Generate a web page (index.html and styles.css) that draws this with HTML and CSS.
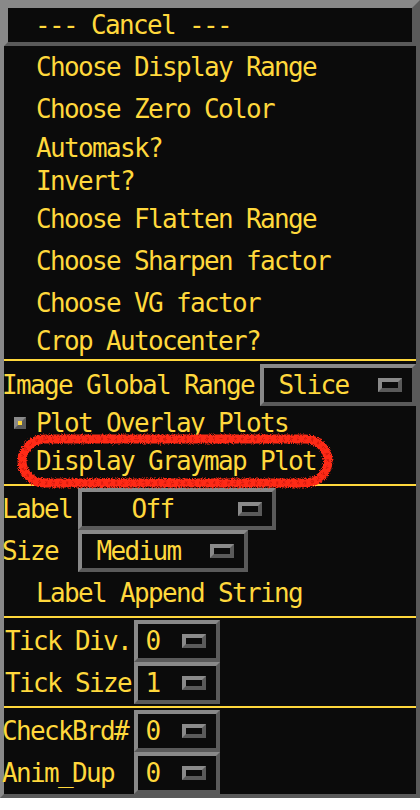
FILE: index.html
```html
<!DOCTYPE html>
<html>
<head>
<meta charset="utf-8">
<link rel="stylesheet" href="styles.css">
</head>
<body>
<div class="frame">
  <div class="cancel">--- Cancel ---</div>
  <div class="menu">
    <div class="item h42">Choose Display Range</div>
    <div class="item h42">Choose Zero Color</div>
    <div class="item h35">Automask?</div>
    <div class="item h32">Invert?</div>
    <div class="item h44">Choose Flatten Range</div>
    <div class="item h40">Choose Sharpen factor</div>
    <div class="item h44">Choose VG factor</div>
    <div class="item h31">Crop Autocenter?</div>
  </div>
  <div class="sep sep-first"></div>
  <div class="field first">
    <span class="flabel w-igr">Image Global Range</span>
    <div class="dropdown w156"><span class="dd-text">Slice</span><span class="ind"></span></div>
  </div>
  <div class="item check h33"><span class="cbox"></span>Plot Overlay Plots</div>
  <div class="item marked h45">Display Graymap Plot<svg class="scribble" viewBox="0 0 316 54" width="316" height="54">
      <defs>
        <filter id="rough" x="-5%" y="-25%" width="110%" height="150%">
          <feTurbulence type="fractalNoise" baseFrequency="1.1" numOctaves="2" seed="7" result="n"/>
          <feDisplacementMap in="SourceGraphic" in2="n" scale="5" xChannelSelector="R" yChannelSelector="G"/>
        </filter>
      </defs>
      <rect x="5" y="5" width="306" height="44" rx="23" ry="22" fill="none" stroke="#fe2a18" stroke-width="9" filter="url(#rough)"/>
      <rect x="5" y="5" width="306" height="44" rx="23" ry="22" fill="none" stroke="#d81a10" stroke-width="3" stroke-dasharray="2 5" filter="url(#rough)"/>
    </svg></div>
  <div class="sep"></div>
  <div class="field first">
    <span class="flabel w-lbl">Label</span>
    <div class="dropdown w198"><span class="dd-text">Off</span><span class="ind"></span></div>
  </div>
  <div class="field">
    <span class="flabel w-lbl">Size</span>
    <div class="dropdown w170"><span class="dd-text">Medium</span><span class="ind"></span></div>
  </div>
  <div class="item h42 gapb">Label Append String</div>
  <div class="sep"></div>
  <div class="field first">
    <span class="flabel w-tick indent">Tick Div.</span>
    <div class="dropdown w86"><span class="dd-text">0</span><span class="ind"></span></div>
  </div>
  <div class="field">
    <span class="flabel w-tick indent">Tick Size</span>
    <div class="dropdown w86"><span class="dd-text">1</span><span class="ind"></span></div>
  </div>
  <div class="sep sep-gap"></div>
  <div class="field first">
    <span class="flabel w-tick">CheckBrd#</span>
    <div class="dropdown w86"><span class="dd-text">0</span><span class="ind"></span></div>
  </div>
  <div class="field">
    <span class="flabel w-tick">Anim_Dup</span>
    <div class="dropdown w86"><span class="dd-text">0</span><span class="ind"></span></div>
  </div>
</div>
</body>
</html>
```
FILE: styles.css
```css
html, body {
  margin: 0;
  padding: 0;
  background: #ffffff;
}

.frame {
  position: relative;
  width: 420px;
  box-sizing: border-box;
  border: 4px solid;
  border-color: #898989 #5a5a5a #5a5a5a #898989;
  background: #0b0b0b;
  color: #ffd83c;
  font-family: "DejaVu Sans Mono", monospace;
  font-size: 26px;
  letter-spacing: -1.65px;
  white-space: nowrap;
}

.cancel {
  height: 42px;
  box-sizing: border-box;
  border: 4px solid;
  border-color: #898989 #5a5a5a #5a5a5a #898989;
  line-height: 35px;
  padding-left: 27px;
  background: #0b0b0b;
}

.item {
  position: relative;
  padding-left: 32px;
}

.h31 { height: 31px; line-height: 32px; }
.h32 { height: 32px; line-height: 33px; }
.h33 { height: 33px; line-height: 34px; }
.h35 { height: 35px; line-height: 36px; }
.h40 { height: 40px; line-height: 41px; }
.h42 { height: 42px; line-height: 43px; }
.h44 { height: 44px; line-height: 45px; }
.h45 { height: 45px; line-height: 45px; }

.gapb { margin-bottom: 2px; }

.sep {
  height: 2px;
  background: #ffd83c;
}

.sep-first { margin-top: 3px; }
.sep-gap { margin-top: 2px; }

.check {
  display: flex;
  align-items: center;
  padding-left: 10px;
}

.cbox {
  width: 12px;
  height: 12px;
  box-sizing: border-box;
  border: 4px solid;
  border-color: #8a8a8a #5a5a5a #5a5a5a #8a8a8a;
  background: #ffd83c;
  margin-right: 10px;
  flex: none;
}

.scribble {
  position: absolute;
  left: 13px;
  top: -5px;
  overflow: visible;
}

.field {
  display: flex;
  align-items: center;
  height: 42px;
}

.field.first { margin-top: 2px; }
.sep-first + .field.first { margin-top: 3px; }

.flabel {
  line-height: 43px;
  flex: none;
  margin-left: -2px;
}

.flabel.indent { margin-left: 1px; }

.w-igr { width: 258px; }
.w-lbl { width: 76px; }
.w-tick { width: 132px; }
.w-tick.indent { width: 129px; }

.dropdown {
  display: flex;
  align-items: center;
  height: 42px;
  box-sizing: border-box;
  border: 4px solid;
  border-color: #898989 #5a5a5a #5a5a5a #898989;
  flex: none;
}

.w156 { width: 156px; }
.w198 { width: 198px; }
.w170 { width: 170px; }
.w86 { width: 86px; }

.dd-text {
  flex: 1;
  text-align: center;
  line-height: 35px;
}

.ind {
  width: 24px;
  height: 14px;
  box-sizing: border-box;
  border: 4px solid;
  border-color: #8a8a8a #5a5a5a #5a5a5a #8a8a8a;
  background: #0b0b0b;
  margin-left: 15px;
  margin-right: 10px;
  flex: none;
}
```
